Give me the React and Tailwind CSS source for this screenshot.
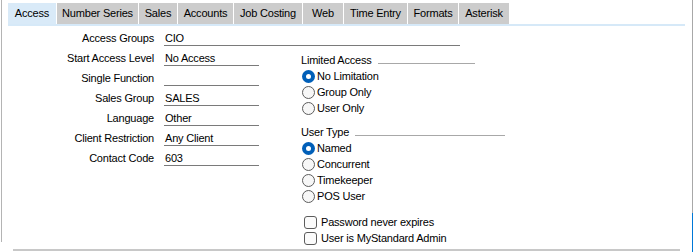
import React from 'react';

const tabs = [
  { label: 'Access', w: 'w-[48px]', active: true },
  { label: 'Number Series', w: 'w-[81px]' },
  { label: 'Sales', w: 'w-[38px]' },
  { label: 'Accounts', w: 'w-[55px]' },
  { label: 'Job Costing', w: 'w-[68px]' },
  { label: 'Web', w: 'w-[40px]' },
  { label: 'Time Entry', w: 'w-[63px]' },
  { label: 'Formats', w: 'w-[50px]' },
  { label: 'Asterisk', w: 'w-[50px]' },
];

const fields = [
  { label: 'Start Access Level', value: 'No Access' },
  { label: 'Single Function', value: '' },
  { label: 'Sales Group', value: 'SALES' },
  { label: 'Language', value: 'Other' },
  { label: 'Client Restriction', value: 'Any Client' },
  { label: 'Contact Code', value: '603' },
];

function Field({ label, value, wide }) {
  return (
    <div className="flex h-[20px] items-end">
      <div className="w-[152px] text-right leading-[13px] mb-[1px] whitespace-nowrap">{label}</div>
      <div
        className={
          'ml-[10px] h-[14px] border-b border-[#7a7a7a] pl-[1px] leading-[13px] whitespace-nowrap ' +
          (wide ? 'w-[296px]' : 'w-[95px]')
        }
      >
        {value}
      </div>
    </div>
  );
}

function Heading({ text, w }) {
  return (
    <div className={'flex h-[16px] items-end ' + w}>
      <span className="leading-[16px] whitespace-nowrap">{text}</span>
      <div className="ml-[6px] mb-[4px] h-[1px] flex-1 bg-[#a8a8a8]" />
    </div>
  );
}

function Radio({ label, checked }) {
  return (
    <div className="flex h-[16px] items-center gap-[2px]">
      {checked ? (
        <span className="ml-[1px] flex h-[13px] w-[13px] items-center justify-center rounded-full bg-[#005fb8]">
          <span className="h-[5px] w-[5px] rounded-full bg-white" />
        </span>
      ) : (
        <span className="ml-[1px] h-[13px] w-[13px] rounded-full border border-[#5c5c5c] bg-[#f7f7f7]" />
      )}
      <span className="leading-[16px] whitespace-nowrap">{label}</span>
    </div>
  );
}

function Check({ label }) {
  return (
    <div className="flex h-[16px] items-center gap-[4px]">
      <span className="ml-[3px] h-[13px] w-[13px] rounded-[3px] border border-[#5c5c5c] bg-[#fbfbfb]" />
      <span className="leading-[16px] whitespace-nowrap">{label}</span>
    </div>
  );
}

export default function App() {
  return (
    <div
      className="flex h-[252px] w-[693px] overflow-hidden bg-white text-[11px] tracking-[-0.2px] text-black"
      style={{ fontFamily: '"Liberation Sans", Arial, sans-serif' }}
    >
      {/* left frame edge */}
      <div className="ml-[1px] h-[242px] w-[1px] bg-[#b4b4b4]" />

      <div className="flex flex-1 flex-col">
        {/* tab strip */}
        <div className="flex gap-[1px] pl-[6px] pt-[3px]">
          {tabs.map((t) => (
            <div
              key={t.label}
              className={
                'flex h-[21px] items-center justify-center whitespace-nowrap ' +
                t.w +
                (t.active ? ' bg-[#d9eaf8]' : ' bg-[#cccccc]')
              }
            >
              {t.label}
            </div>
          ))}
        </div>
        <div className="ml-[6px] mr-[7px] h-[2px] bg-[#d6e9f8]" />

        {/* form */}
        <Field label="Access Groups" value="CIO" wide />
        <div className="flex">
          <div className="flex flex-col">
            {fields.map((f) => (
              <Field key={f.label} label={f.label} value={f.value} />
            ))}
          </div>

          <div className="ml-[42px] mt-[6px] flex flex-col">
            <Heading text="Limited Access" w="w-[174px]" />
            <Radio label="No Limitation" checked />
            <Radio label="Group Only" />
            <Radio label="User Only" />

            <div className="mt-[8px]">
              <Heading text="User Type" w="w-[204px]" />
            </div>
            <Radio label="Named" checked />
            <Radio label="Concurrent" />
            <Radio label="Timekeeper" />
            <Radio label="POS User" />

            <div className="mt-[10px]">
              <Check label="Password never expires" />
              <Check label="User is MyStandard Admin" />
            </div>
          </div>
        </div>

        <div className="mt-auto mb-[1px] ml-[11px] mr-[12px] h-[2px] bg-[#c8c8c8]" />
      </div>

      {/* right frame edge */}
      <div className="flex w-[1px] flex-col">
        <div className="h-[213px] bg-[#a8a8a8]" />
        <div className="flex-1 bg-[#0078d7]" />
      </div>
    </div>
  );
}
